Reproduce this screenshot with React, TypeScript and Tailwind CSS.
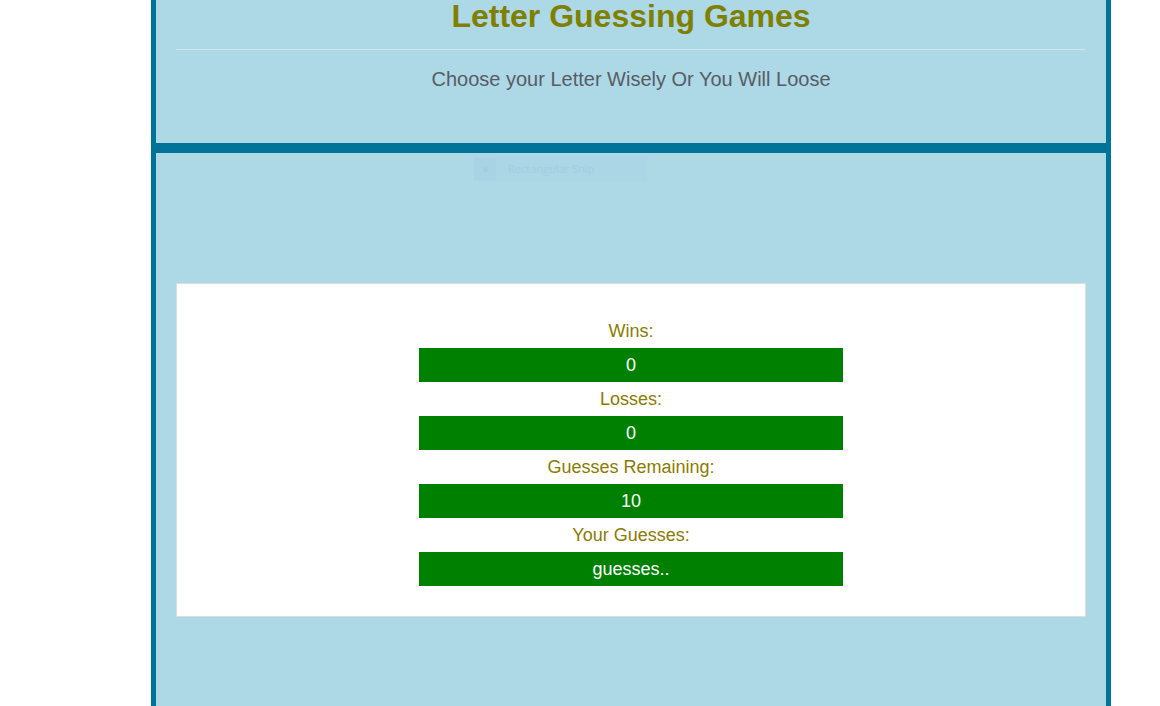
import React from "react"

const stats = [
  { label: "Wins:", value: "0" },
  { label: "Losses:", value: "0" },
  { label: "Guesses Remaining:", value: "10" },
  { label: "Your Guesses:", value: "guesses.." },
]

export default function App() {
  return (
    <div className="min-h-screen bg-white font-['Liberation_Sans',Arial,sans-serif]">
      <div className="ml-[151px] w-[960px] min-h-[706px] bg-[#add8e6] border-x-[5px] border-[#007399]">
        {/* Header */}
        <header className="px-5 h-[143px] border-b-[5px] border-[#007399] box-content">
          <h1 className="text-[32px] leading-[32px] font-bold text-[#808000] text-center">
            Letter Guessing Games
          </h1>
          <hr className="mt-[17px] border-0 h-px bg-[#cfe6ee]" />
          <p className="mt-[18px] text-[20px] leading-[23px] text-[#585c64] text-center">
            Choose your Letter Wisely Or You Will Loose
          </p>
        </header>

        {/* Game section */}
        <section className="border-t-[5px] border-[#007399] px-5 pb-10">
          {/* faint snipping tool overlay */}
          <div className="ml-[298px] mt-[4px] w-[173px] h-[24px] flex items-center gap-[12px] bg-[#aad6e6]">
            <div className="w-[22px] h-[22px] bg-[#a7d3e4] flex items-center justify-center">
              <div className="w-[5px] h-[5px] rounded-full bg-[#a0cee0]" />
            </div>
            <span className="text-[11px] text-[#a2cfe0] font-['Open_Sans',sans-serif]">Rectangular Snip</span>
          </div>

          <div className="mt-[102px] bg-white border border-[#dddddd] py-[30px] flex flex-col items-center">
            {stats.map((s) => (
              <div key={s.label} className="w-[424px] flex flex-col items-center">
                <div className="h-[34px] flex items-center text-[18px] text-[#8a7c00]">{s.label}</div>
                <div className="w-full h-[34px] bg-[#008000] flex items-center justify-center text-[18px] text-white">
                  {s.value}
                </div>
              </div>
            ))}
          </div>
        </section>
      </div>
    </div>
  )
}
